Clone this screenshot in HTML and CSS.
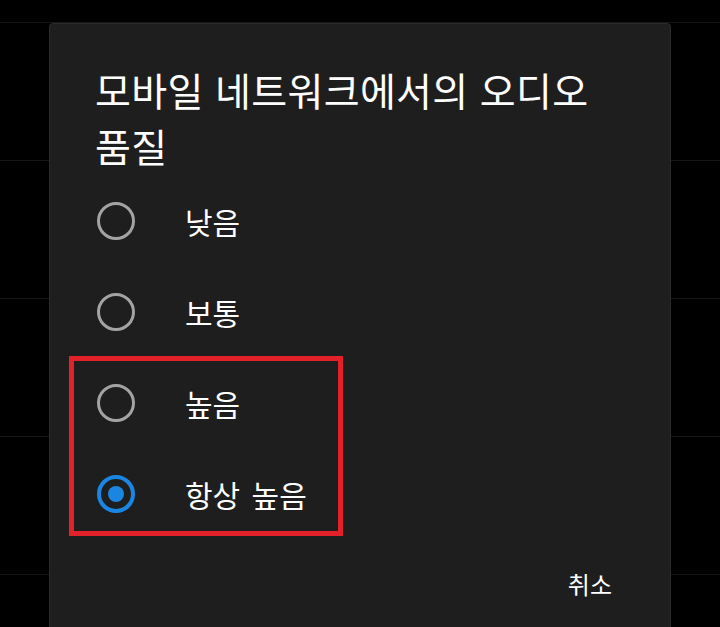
FILE: index.html
```html
<!DOCTYPE html>
<html lang="ko">
<head>
<meta charset="utf-8">
<title>오디오 품질</title>
<link rel="stylesheet" href="styles.css">
</head>
<body>
<div class="backdrop">
  <div class="bg-row"></div>
  <div class="bg-row"></div>
  <div class="bg-row"></div>
  <div class="bg-row"></div>
  <div class="bg-row"></div>
</div>
<div class="dialog">
  <h1 class="title">모바일 네트워크에서의 오디오 품질</h1>
  <div class="options">
    <div class="option"><span class="radio"></span><span class="label">낮음</span></div>
    <div class="option"><span class="radio"></span><span class="label">보통</span></div>
    <div class="highlight">
      <div class="option"><span class="radio"></span><span class="label">높음</span></div>
      <div class="option"><span class="radio checked"></span><span class="label">항상 높음</span></div>
    </div>
  </div>
  <div class="actions"><span class="cancel">취소</span></div>
</div>
</body>
</html>
```
FILE: styles.css
```css
html, body {
  margin: 0;
  padding: 0;
  background: #000;
  height: 100%;
  overflow: hidden;
  font-family: "Noto Sans CJK KR", "Noto Sans", sans-serif;
}

.backdrop {
  padding-top: 22px;
}

.bg-row {
  height: 137px;
  border-top: 1px solid #161616;
}

.dialog {
  position: absolute;
  left: 49px;
  top: 23px;
  width: 622px;
  height: 640px;
  background: #1e1e1e;
  border: 1px solid #2b2b2b;
  border-radius: 4px;
  box-sizing: border-box;
  color: #fff;
}

.title {
  margin: 0;
  padding: 37px 36px 0 45px;
  font-size: 39px;
  font-weight: 400;
  line-height: 56px;
  letter-spacing: 0.35px;
}

.options {
  margin-top: 2px;
}

.option {
  height: 91px;
  display: flex;
  align-items: center;
  padding-left: 47px;
}

.radio {
  width: 38px;
  height: 38px;
  box-sizing: border-box;
  border: 3px solid #a3a3a3;
  border-radius: 50%;
  flex: none;
  position: relative;
}

.radio.checked {
  border: 4px solid #1a86e2;
}

.radio.checked::after {
  content: "";
  position: absolute;
  left: 7px;
  top: 7px;
  width: 16px;
  height: 16px;
  border-radius: 50%;
  background: #1a86e2;
}

.label {
  margin-left: 50px;
  font-size: 30px;
  line-height: 40px;
  word-spacing: 3px;
}

.highlight {
  position: relative;
}

.highlight::after {
  content: "";
  position: absolute;
  left: 19px;
  top: -1px;
  width: 274px;
  height: 180px;
  box-sizing: border-box;
  border: 5px solid #e3212b;
}

.actions {
  display: flex;
  justify-content: flex-end;
  padding: 29px 58px 0 0;
}

.cancel {
  font-size: 24px;
  line-height: 32px;
}
```
